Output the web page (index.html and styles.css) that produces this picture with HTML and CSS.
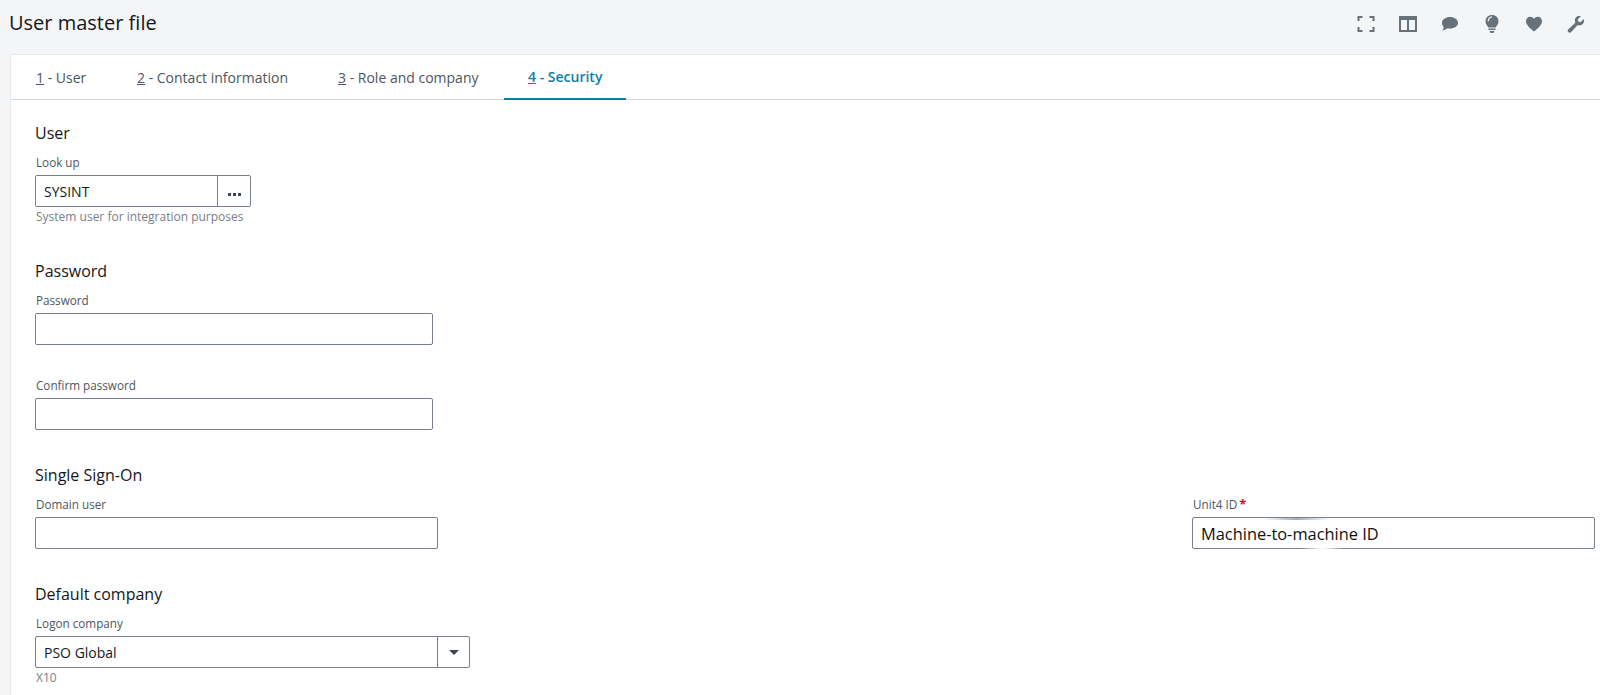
FILE: index.html
```html
<!DOCTYPE html>
<html lang="en">
<head>
<meta charset="utf-8">
<title>User master file</title>
<link rel="stylesheet" href="styles.css">
</head>
<body>
<header class="topbar">
  <h1 class="title">User master file</h1>
  <div class="tools">
    <svg class="tool" viewBox="0 0 18 18"><path class="outline" d="M1.500 6V2h4M12.500 2h4v4M16.500 12v4h-4M5.500 16h-4v-4"/></svg>
    <svg class="tool" viewBox="0 0 18 18"><path fill-rule="evenodd" d="M0 1h18v16H0zM2 5v10h6V5zM10 5v10h6V5z"/></svg>
    <svg class="tool" viewBox="0 0 18 18"><path transform="translate(-.6 0)" d="M9.600 2c4.400 0 8 2.500 8 5.800s-3.600 5.800-8 5.800c-.9 0-1.700-.1-2.500-.3-1.400 1.300-3.400 2-5.500 2.300 1-1 1.600-2.200 1.700-3.700C2.300 10.800 1.600 9.400 1.600 7.800 1.600 4.500 5.200 2 9.600 2z"/></svg>
    <svg class="tool" viewBox="0 0 18 18"><path fill-rule="evenodd" d="M9 0c3.700 0 6.500 2.700 6.500 6.200 0 2.800-1.900 4.300-2.700 6.300H5.200C4.400 10.500 2.500 9 2.500 6.200 2.500 2.700 5.300 0 9 0zM4.600 6.200h1.300C5.900 4 7.300 2.500 9 2.400V1.300C6.500 1.400 4.600 3.500 4.600 6.200zM5.500 13.500h7v1.600h-7zM6.500 16h5l-1 2h-3z"/></svg>
    <svg class="tool" viewBox="0 0 18 18"><path d="M9 16.500C6.500 14.300 1 10.500 1 6.200 1 3.600 3 1.800 5.200 1.800 6.800 1.800 8.200 2.600 9 4c.8-1.400 2.200-2.200 3.800-2.200C15 1.800 17 3.600 17 6.200c0 4.300-5.500 8.100-8 10.300z"/></svg>
    <svg class="tool" viewBox="0 0 18 18"><path d="M12.300 1c.6 0 1.100.1 1.600.3l-3 3 .4 2.400 2.400.4 3-3c.2.500.3 1 .3 1.600 0 2.600-2.100 4.700-4.700 4.700-.6 0-1.100-.1-1.600-.3l-6.500 6.900c-.9.900-2.100.9-2.900.1s-.8-2 .1-2.900l6.900-6.500c-.2-.5-.3-1-.3-1.600C7.500 3.100 9.700 1 12.300 1z"/></svg>
  </div>
</header>
<main class="card">
  <nav class="tabs">
    <a class="tab tab-one"><u>1</u> - User</a>
    <a class="tab tab-two"><u>2</u> - Contact information</a>
    <a class="tab tab-three"><u>3</u> - Role and company</a>
    <a class="tab tab-four active"><u>4</u> - Security</a>
  </nav>
  <div class="form">
    <section class="group group-user">
      <h2 class="heading">User</h2>
      <label class="label">Look up</label>
      <div class="box box-lookup"><span class="value">SYSINT</span><span class="addon dots"><i></i><i></i><i></i></span></div>
      <p class="hint">System user for integration purposes</p>
    </section>
    <section class="group group-password">
      <h2 class="heading">Password</h2>
      <label class="label">Password</label>
      <div class="box box-password"></div>
      <label class="label label-confirm">Confirm password</label>
      <div class="box box-password"></div>
    </section>
    <section class="group group-sso">
      <h2 class="heading">Single Sign-On</h2>
      <div class="sso-row">
        <div>
          <label class="label">Domain user</label>
          <div class="box box-domain"></div>
        </div>
        <div class="unit-field">
          <label class="label">Unit4 ID<span class="req">*</span></label>
          <div class="box box-unit"><span class="value value-large">Machine-to-machine ID</span></div>
          <span class="smear smear-top"></span>
          <span class="smear smear-bottom"></span>
        </div>
      </div>
    </section>
    <section class="group group-company">
      <h2 class="heading">Default company</h2>
      <label class="label">Logon company</label>
      <div class="box box-company"><span class="value">PSO Global</span><span class="addon caret-cell"><span class="caret"></span></span></div>
      <p class="hint">X10</p>
    </section>
  </div>
</main>
</body>
</html>
```
FILE: styles.css
```css
* { box-sizing: border-box; }
html, body { height: 100%; }
body {
  margin: 0;
  overflow: hidden;
  background: #f4f5f7;
  font-family: "Open Sans", sans-serif;
  color: #111;
}
.topbar {
  height: 54px;
  display: flex;
  justify-content: space-between;
  align-items: flex-start;
  padding: 8px 15px 0 9px;
}
.title {
  margin: 0;
  font-size: 20px;
  font-weight: 400;
  line-height: 29px;
  color: #14171a;
}
.tools { display: flex; gap: 24px; padding-top: 7px; }
.tool { width: 18px; height: 18px; fill: #66717a; display: block; }
.outline { fill: none; stroke: #66717a; stroke-width: 2; }
.card {
  margin-left: 10px;
  height: 641px;
  background: #fff;
  border-top: 1px solid #e6e8ea;
  border-left: 1px solid #e6e8ea;
}
.tabs {
  height: 45px;
  display: flex;
  border-bottom: 1px solid #d3d6d9;
  font-size: 14px;
}
.tab {
  height: 45px;
  line-height: 46px;
  color: #4c5660;
  white-space: nowrap;
}
.tab-one { margin-left: 25px; width: 101px; }
.tab-two { width: 201px; }
.tab-three { width: 166px; }
.tab-four {
  width: 122px;
  padding-left: 24px;
  line-height: 44px;
  font-weight: 600;
  color: #0f7cac;
  border-bottom: 2px solid #0f7cac;
}
.form { padding: 0 5px 0 24px; }
.group { display: block; }
.heading {
  margin: 0;
  font-size: 16px;
  font-weight: 400;
  line-height: 20px;
  color: #14171a;
}
.group-user { padding-top: 23px; }
.group-password { padding-top: 37px; }
.group-sso { padding-top: 35px; }
.group-company { padding-top: 35px; }
.label {
  display: block;
  margin-top: 12px;
  padding-left: 1px;
  font-size: 11.7px;
  line-height: 15px;
  height: 15px;
  color: #4c5660;
}
.label-confirm { margin-top: 33px; }
.box {
  display: flex;
  align-items: center;
  height: 32px;
  margin-top: 5px;
  border: 1px solid #76808a;
  border-radius: 2px;
  background: #fff;
}
.box-lookup { width: 216px; }
.box-password { width: 398px; }
.box-domain { width: 403px; }
.box-unit { width: 403px; }
.box-company { width: 435px; }
.value {
  flex: 1;
  padding-left: 8px;
  font-size: 14px;
  color: #14171a;
}
.value-large { font-size: 16.4px; color: #111; }
.addon {
  height: 100%;
  border-left: 1px solid #76808a;
  display: flex;
  align-items: center;
  justify-content: center;
}
.dots {
  width: 33px;
  gap: 2px;
  padding-top: 6px;
}
.dots i {
  width: 3px;
  height: 3px;
  background: #3d464e;
}
.caret-cell { width: 32px; }
.caret {
  width: 0;
  height: 0;
  border-left: 5px solid transparent;
  border-right: 5px solid transparent;
  border-top: 5px solid #3d464e;
}
.hint {
  margin: 2px 0 0;
  padding-left: 1px;
  font-size: 12px;
  line-height: 15px;
  color: #76808a;
}
.sso-row { display: flex; justify-content: space-between; }
.unit-field { position: relative; }
.req { margin-left: 2px; color: #c8102e; font-weight: 700; font-size: 13px; }
.smear {
  position: absolute;
  height: 2px;
  background: linear-gradient(90deg, transparent, #a9adb0 50%, transparent);
}
.smear-top { left: 71px; width: 67px; top: 33px; }
.smear-bottom { left: 108px; width: 45px; top: 63px; height: 1px; background: linear-gradient(90deg, transparent, #ffffff 50%, transparent); }
```
